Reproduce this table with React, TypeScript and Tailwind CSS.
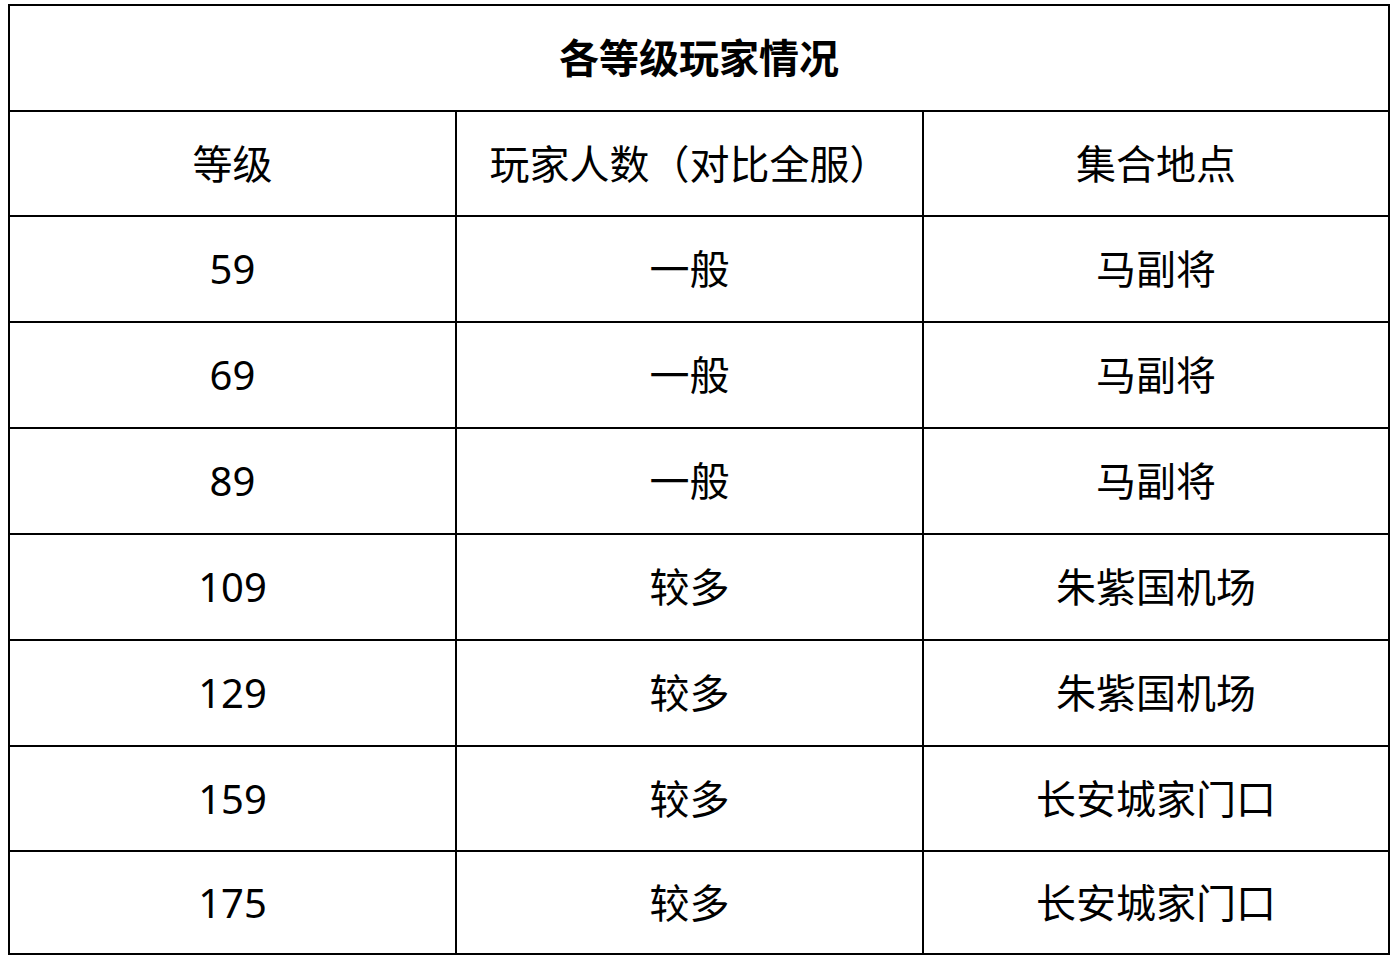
const rows: { lv: string; cnt: string; place: string; h: string }[] = [
  { lv: "59", cnt: "一般", place: "马副将", h: "h-[106px]" },
  { lv: "69", cnt: "一般", place: "马副将", h: "h-[106px]" },
  { lv: "89", cnt: "一般", place: "马副将", h: "h-[106px]" },
  { lv: "109", cnt: "较多", place: "朱紫国机场", h: "h-[106px]" },
  { lv: "129", cnt: "较多", place: "朱紫国机场", h: "h-[106px]" },
  { lv: "159", cnt: "较多", place: "长安城家门口", h: "h-[105px]" },
  { lv: "175", cnt: "较多", place: "长安城家门口", h: "h-[101px]" },
];

function Row({ a, b, c, h, last }: { a: string; b: string; c: string; h: string; last?: boolean }) {
  return (
    <div className={`flex ${h} ${last ? "" : "border-b-2 border-black"}`}>
      <div className="flex w-[447px] items-center justify-center border-r-2 border-black">{a}</div>
      <div className="flex w-[467px] items-center justify-center border-r-2 border-black">{b}</div>
      <div className="flex flex-1 items-center justify-center">{c}</div>
    </div>
  );
}

export default function App() {
  return (
    <div
      className="min-h-[962px] w-[1398px] bg-white pl-2 pt-1 text-[40px] leading-none text-black"
      style={{ fontFamily: '"Noto Sans", "Noto Sans CJK SC", sans-serif' }}
    >
      <div className="w-[1382px] border-2 border-black">
        <div className="flex h-[106px] items-center justify-center border-b-2 border-black font-bold">
          各等级玩家情况
        </div>
        <Row a="等级" b="玩家人数（对比全服）" c="集合地点" h="h-[105px]" />
        {rows.map((r, i) => (
          <Row key={r.lv} a={r.lv} b={r.cnt} c={r.place} h={r.h} last={i === rows.length - 1} />
        ))}
      </div>
    </div>
  );
}
